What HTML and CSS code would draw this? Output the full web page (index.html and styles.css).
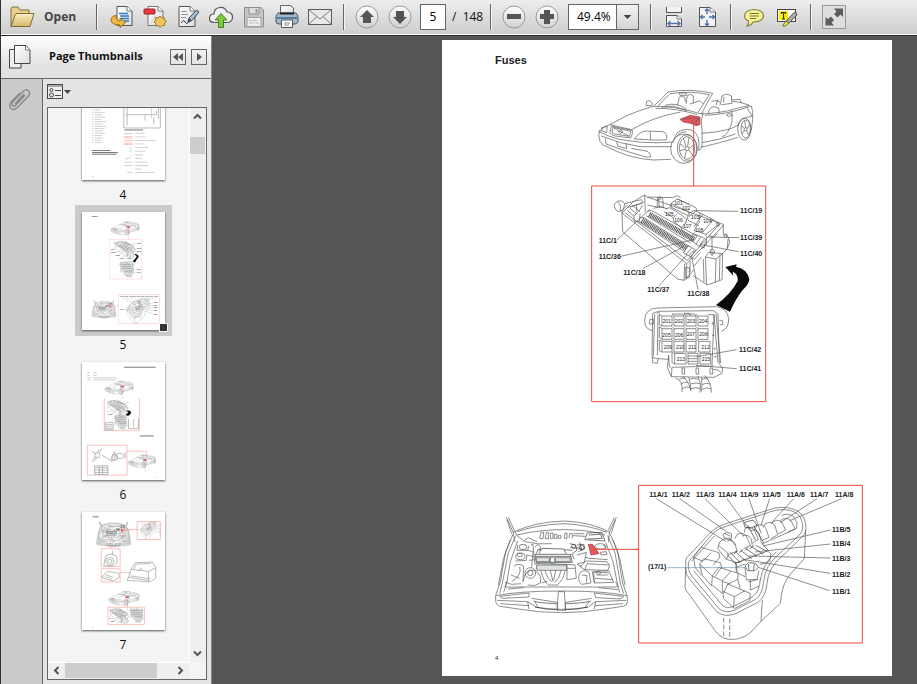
FILE: index.html
```html
<!DOCTYPE html>
<html lang="en">
<head>
  <meta charset="UTF-8">
  <meta name="viewport" content="width=device-width, initial-scale=1.0">
  <title>Fuses</title>
  <link rel="stylesheet" href="styles.css">
</head>
<body>
  <!-- shared drawings, used by the page and by the thumbnails -->
  <svg class="library" width="0" height="0" aria-hidden="true">
    <defs>
      <linearGradient id="folderFill" x1="0" y1="0" x2="0" y2="1">
        <stop offset="0" stop-color="#fbefc8"/><stop offset="1" stop-color="#d8b869"/>
      </linearGradient>
      <linearGradient id="paperFill" x1="0" y1="0" x2="1" y2="1">
        <stop offset="0" stop-color="#fff"/><stop offset="1" stop-color="#ddd"/>
      </linearGradient>
      <linearGradient id="roundFill" x1="0" y1="0" x2="0" y2="1">
        <stop offset="0" stop-color="#fff"/><stop offset="1" stop-color="#cfcfcf"/>
      </linearGradient>

      <symbol id="car" viewBox="0 0 540 330">
        <path d="M28 158 Q34 142 62 133 L110 107 Q150 90 190 79 M60 134 L125 149 Q185 112 272 96 M28 150 Q24 168 30 184 L38 194 L80 214 Q130 236 190 240 L243 238 M30 156 Q50 168 88 178 L155 187 Q200 190 252 186 M34 168 Q90 192 150 200 L245 200 M46 176 L48 192 L120 217 L168 231 L182 231 Q182 218 172 214 L124 205 M80 184 L83 198 L110 206 L108 190"/>
        <path d="M64 138 L60 158 Q64 166 76 168 L122 174 Q129 162 127 151 Q95 146 64 138 M69 142 L66 157 Q70 162 80 163 L118 169 Q122 160 122 154 Z M72 144 L116 168 M92 150 L98 155 L91 161 L85 155 Z"/>
        <path d="M133 177 Q148 155 168 153 L218 155 Q236 160 228 180 Q180 181 133 177 M180 155 L182 179 M34 143 L52 139 L50 158 L36 153 Z"/>
        <path d="M190 79 Q215 58 234 36 Q300 24 368 40 Q352 68 334 102 M203 80 Q222 58 240 41 Q300 31 358 44 L324 97 M190 79 Q250 76 334 102 M196 85 Q260 84 322 104 M215 82 L250 78 L290 92 M225 76 Q260 65 290 88 M168 76 L170 64 L180 62 L188 72 L185 77 Z M268 39 L290 39 L288 46 L270 46 Z"/>
        <path d="M262 77 L268 52 Q276 44 284 52 L286 66 M288 72 L292 46 Q302 40 310 48 L310 70 M300 72 L330 62 L340 72 M390 76 L396 48 Q410 38 424 48 L426 70 L395 74 M402 50 L400 68 M384 58 L378 76 M356 100 Q356 82 372 80 L386 84 L388 100 M424 60 L450 58 L454 70 M364 64 Q378 58 390 66"/>
        <path d="M334 102 Q400 98 430 88 L478 76 Q455 66 428 64 M345 106 Q410 104 484 78 Q490 92 488 118 M340 98 L334 120 Q338 160 336 200 M334 160 Q380 158 420 147 L444 136 M336 188 Q390 180 436 162 M336 201 Q400 186 444 172 M425 92 Q432 130 412 158 Q406 168 396 170 M444 138 Q450 112 488 108 M488 118 L484 150 L478 158 M470 82 L486 108"/>
        <ellipse cx="418" cy="105" rx="8" ry="4"/>
        <path d="M252 182 Q255 150 290 148 Q322 148 327 185 L326 212 Q334 208 336 198 M260 170 Q268 156 290 155"/>
        <ellipse cx="282" cy="206" rx="40" ry="44"/><ellipse cx="291" cy="204" rx="29" ry="40"/><ellipse cx="291" cy="204" rx="23" ry="34"/><circle cx="291" cy="206" r="6"/>
        <path d="M288 200 L280 174 M293 199 L297 172 M297 205 L312 194 M297 210 L308 226 M289 212 L284 234 M285 208 L270 212 M284 201 L270 192"/>
        <ellipse cx="463" cy="147" rx="20" ry="33"/><ellipse cx="467" cy="147" rx="14" ry="27"/><circle cx="467" cy="148" r="5"/>
        <path d="M467 143 L464 122 M471 146 L479 134 M470 152 L476 166 M463 151 L456 162 M462 145 L455 136"/>
        <path class="red-fill" d="M270 118 L300 106 L330 111 L330 134 L318 137 L306 131 L280 126 Z"/>
        <path d="M278 118 L306 114 L328 116 M306 130 L307 120 M318 136 L318 122 L328 118"/>
        <path class="red-line" d="M311 126 V319"/>
      </symbol>

      <symbol id="fuseBoxes" viewBox="0 0 540 660">
        <path class="red-line" d="M5 3 H527 V650 H5 Z"/>
        <!-- upper box -->
        <path d="M96 84 L98 140 L262 282 L283 286 L312 254 M96 84 L290 236 L398 124 M104 82 L292 226 L388 118 M96 84 L130 50 L164 30 L172 36 L400 118 L398 126 M164 30 L166 80 M172 36 L248 38 L262 32 L272 38 M400 120 L400 148 M96 84 L96 76 L112 60 M290 236 V284 M300 228 L300 262 M284 236 L282 286"/>
        <path d="M82 50 Q68 56 76 72 Q84 84 98 76 M82 50 Q92 42 104 56 L100 76 M82 50 Q96 60 90 78 M104 56 L154 44 L160 52 L120 66 M112 68 L158 54 M112 76 L132 94 L150 74 L158 60 M120 70 L142 88 M128 62 L150 80 M132 94 L132 108 L156 112 M140 60 L140 80 M150 86 L148 108"/>
        <path d="M202 40 Q210 32 218 40 L220 66 M202 40 V66 M206 42 L208 68 M172 60 L200 66 L222 68 M190 70 L212 64 L232 72 M244 54 L262 42 L318 68 L320 76 L298 94 L242 66 Z M262 42 L298 58 M242 66 L244 56 L296 80 L298 94"/>
        <path d="M226 72 L238 68 L260 80 L290 102 L286 116 M222 80 L250 98 L262 86 M250 98 L250 108 L274 128 L290 110 M274 128 L276 136 L304 154 L314 142 M296 86 L312 76 L330 84 L328 106 M292 94 L294 106 L326 122 M330 84 L370 104 L386 118 L348 148 L312 136 L330 108 M338 88 L312 126 M370 104 L336 144"/>
        <path class="hatch" d="M178 88 L312 164 M156 106 L290 190"/>
        <path d="M172 80 L184 76 L322 154 M168 92 L302 174 M150 98 L162 98 L298 184 M146 110 L284 200 M302 164 L316 148 L344 160 L328 184 Z M322 152 L310 170 M332 156 L318 178 M280 204 L294 182 L316 194 L304 216 Z M288 208 L304 190 M296 212 L312 196 M348 148 L350 178 L336 192 M356 150 L370 158 L382 146 M366 158 L366 202 M328 182 L342 188 L346 170 M300 218 L314 222 L328 206"/>
        <path d="M400 148 Q420 150 418 176 L412 190 L398 206 L396 284 L352 300 L310 272 M412 190 L414 162 M356 202 L398 206 L378 222 L346 216 Z M346 216 L350 298 M378 222 L376 292 M340 222 L342 292 M334 216 L312 244 M390 208 L388 286 M360 204 Q358 192 368 192 Q378 196 372 206 M286 248 H298 V278 H286 Z"/>
        <circle cx="407" cy="152" r="5"/><circle cx="366" cy="207" r="4"/><circle cx="384" cy="118" r="5"/><circle cx="208" cy="40" r="4"/>
        <path d="M445 79 L318 77 M80 166 L180 72 M92 214 L312 164 M160 250 L282 184 M207 302 L292 208 M324 314 L306 220 M448 158 L354 156 M446 200 L330 178"/>
        <path class="black-fill" d="M406 246 L440 238 L438 245 Q474 252 478 284 Q476 298 458 315 Q438 340 420 380 L378 360 Q424 326 443 288 Q446 268 428 260 L430 272 Z"/>
        <g class="label">
          <text x="450" y="84">11C/19</text><text x="26" y="174">11C/1</text><text x="26" y="222">11C/36</text>
          <text x="100" y="269">11C/18</text><text x="172" y="321">11C/37</text><text x="292" y="332">11C/38</text>
          <text x="450" y="164">11C/39</text><text x="450" y="212">11C/40</text>
          <text x="447" y="500">11C/42</text><text x="447" y="557">11C/41</text>
        </g>
        <g class="fuse-number">
          <text x="253" y="59">101</text><text x="276" y="74">102</text><text x="303" y="102">103</text><text x="340" y="115">104</text>
          <text x="226" y="92">105</text><text x="253" y="110">106</text><text x="279" y="128">107</text><text x="315" y="140">108</text>
        </g>
        <!-- lower box -->
        <g transform="translate(0 315)">
          <path d="M188 122 Q163 118 164 90 Q166 56 200 54 L380 50 Q414 56 416 88 Q416 116 394 124 M188 70 L206 64 L370 62 L384 72 L388 220 M188 70 L186 202 M194 72 L190 198 M200 70 L210 66 M204 74 L202 196 M186 202 L204 206 L236 208 M188 202 L188 218 L202 220 L204 206 M236 196 L238 230 L246 236 L244 260 L232 232 L236 196 M246 232 L370 228 M244 260 L372 262 L396 250 L398 234 L386 220 M354 74 L372 74 L366 228 M372 74 L384 218 M378 72 L392 220 M180 88 L190 88 L190 102 L178 102 Z M388 92 H398 V104 H390"/>
          <path d="M216 78 H246 V108 H216 Z M252 78 H282 V108 H252 Z M288 78 H318 V108 H288 Z M324 78 H354 V108 H324 Z M216 116 H246 V148 H216 Z M252 116 H282 V148 H252 Z M288 116 H318 V148 H288 Z M324 116 H354 V148 H324 Z M216 154 H246 V186 H216 Z M252 154 H282 V186 H252 Z M288 154 H318 V186 H288 Z M326 154 H360 V186 H326 Z M254 190 H288 V222 H254 Z M294 190 H324 V222 H294 Z M330 190 H362 V222 H330 Z"/>
          <path d="M216 78 L208 72 V104 L216 108 M252 78 L246 72 H278 L282 78 M288 78 L282 72 H314 L318 78 M324 78 L318 72 M216 116 L208 110 V142 L216 148 M252 116 L246 110 M288 116 L282 110 M324 116 L318 110 M216 154 L208 150 V182 L216 186 M252 154 L246 150 M288 154 L282 150 M326 154 L318 150 M254 190 L246 188 V218 L254 222 M294 198 H324 M294 206 H324 M294 214 H324 M282 70 L300 70 L300 78"/>
          <path d="M276 234 H284 V252 H276 Z M318 234 H326 V252 H318 Z M360 234 H368 V252 H360 Z M370 238 L384 240 L392 246 M256 264 Q280 270 276 306 M280 258 Q300 280 302 300 M268 268 Q276 262 286 266 M272 282 Q284 274 294 278 M276 296 Q290 288 300 292 M296 262 Q304 284 302 304 M324 258 Q336 284 330 308 M298 268 Q310 262 326 268 M302 282 Q318 276 332 282 M302 296 Q318 290 332 296 M334 262 Q338 284 334 304 M344 256 Q364 276 364 308 M336 268 Q348 262 354 268 M336 284 Q350 276 360 282 M336 298 Q350 290 364 296"/>
          <circle cx="368" cy="100" r="2"/><circle cx="370" cy="136" r="2"/><circle cx="374" cy="176" r="2"/><circle cx="376" cy="200" r="2"/>
          <path d="M440 179 L320 200 M440 236 L318 226"/>
          <g class="fuse-number">
            <text x="218" y="100">201</text><text x="254" y="100">202</text><text x="291" y="100">203</text><text x="327" y="100">204</text>
            <text x="217" y="140">205</text><text x="255" y="140">206</text><text x="290" y="139">207</text><text x="328" y="138">208</text>
            <text x="221" y="176">209</text><text x="258" y="177">210</text><text x="295" y="176">211</text><text x="334" y="176">212</text>
            <text x="260" y="213">213</text><text x="335" y="213">215</text>
          </g>
        </g>
      </symbol>

      <symbol id="engineBay" viewBox="0 0 480 435">
        <path d="M64 97 L84 140 L90 172 M70 97 L88 136 M66 104 L80 146 M394 97 L374 140 L370 172 M388 97 L370 136 M392 104 L378 146 M84 142 Q150 110 240 108 Q320 112 374 142 M96 140 Q160 118 240 116 Q310 120 366 142 M88 136 L96 152 L120 170 Q160 180 200 176 M96 150 Q170 132 250 134 Q320 136 360 150 M118 166 L130 158 L156 170"/>
        <path d="M164 160 L168 142 H176 L174 162 Z M180 160 L184 142 H190 L190 162 Z M196 160 V144 H204 V160 Z M208 160 V148 H216 V160 Z M220 160 V152 H228 V160 Z M238 160 L240 144 H246 L246 160 Z M252 160 L254 146 H262 V160 M264 152 L300 154 M266 146 L298 146"/>
        <path class="thick" d="M300 164 L306 144 L350 142 L360 168 Z M312 150 L346 148 L352 160 L308 162"/>
        <path d="M84 148 L62 200 L46 290 L32 332 M92 152 L70 204 L52 294 L44 326 M76 164 L56 220 L40 300 M98 168 L76 230 L66 290 L56 322 M376 148 L398 200 L412 290 L426 332 M368 152 L390 204 L406 294 L416 326 M384 164 L404 220 L420 300 M362 172 L384 230 L396 290 L404 322 M66 290 L60 306 L398 306 L392 290"/>
        <ellipse cx="114" cy="186" rx="12" ry="8"/><ellipse cx="106" cy="214" rx="14" ry="10"/><ellipse cx="104" cy="210" rx="8" ry="5"/>
        <path d="M92 228 L124 226 L126 208 M98 180 L96 196 L128 196 L132 182 M138 180 L144 178 L150 240 M126 196 L144 200 L140 248 M150 186 L158 178 L166 186 L164 206 M128 210 L148 216 M132 226 L150 224 M86 244 Q100 232 116 244 L114 290 M78 270 L104 280 M80 290 Q112 270 104 246 M60 292 L80 298 L108 296"/>
        <path class="thick" d="M150 208 H256 L262 232 H154 Z M152 214 H258 M152 236 L246 238 M166 196 L170 190 L236 192 L244 206 M152 250 H246 M254 176 L272 180 L276 196 L262 206 M276 180 L296 178 L300 190 L280 200 M256 188 L290 190 M284 172 L290 196 M260 206 L268 222 M238 194 L262 196 M154 206 L160 192 L170 196"/>
        <path class="grey-fill" d="M154 240 H244 L246 256 H156 Z M154 218 H196 V230 H154 Z M210 218 H256 V230 H210 Z"/>
        <circle cx="202" cy="226" r="9"/><circle cx="136" cy="264" r="16"/><circle cx="136" cy="264" r="8"/><circle class="thick" cx="266" cy="184" r="6"/><circle class="thick" cx="290" cy="188" r="7"/>
        <path d="M114 290 Q120 250 150 256 Q172 270 166 294 Q150 306 128 300 M168 258 Q176 290 190 300 M180 256 Q186 280 200 290 M196 256 L204 290 M212 256 L206 286 M228 256 Q224 280 210 292 M240 258 Q236 284 218 298 M190 300 H220 M170 294 L188 288 M246 238 L270 240 L274 280 L246 284 Z M248 250 H270 M276 210 L304 202 L298 232 L278 236"/>
        <path d="M286 246 L302 228 L366 230 L374 242 L368 256 L300 254 Z M300 254 L306 236 L372 240 M316 220 L368 224 M322 260 L374 264 L386 292 L328 294 Z M328 294 L326 262 L336 258 L376 258 M336 270 H368 M330 280 L384 284 M286 262 Q300 252 312 262 L318 294 L290 298 Q278 290 282 270 Z M290 270 L306 272 L304 292 M300 216 L318 222 M346 202 L364 200 L366 208 L348 210 Z M354 180 L364 186 L360 196 M276 238 L290 244"/>
        <ellipse cx="346" cy="184" rx="16" ry="8"/><ellipse cx="340" cy="264" rx="7" ry="4"/>
        <path class="red-fill" d="M310 178 L322 178 L334 193 L342 206 L318 210 Z"/>
        <path class="red-line" d="M322 193 H462"/>
        <path d="M32 332 Q100 318 230 318 Q360 318 426 332 L428 350 Q426 362 414 364 L360 372 Q230 394 100 372 L46 364 Q32 360 32 346 Z M44 334 L132 324 V336 L52 340 Z M328 324 L416 334 L408 342 L332 338 Z M36 346 L128 350 L150 364 M424 346 L332 350 L312 364 M46 356 L132 362 M414 356 L330 362 M128 350 L132 372 M332 350 L328 372 M140 340 L216 352 L218 376 M320 340 L242 352 L240 376 M220 320 H238 L242 376 H216 Z M150 350 L160 368 M312 350 L300 368 M150 366 Q230 380 310 366 M70 312 L116 308 M340 308 L400 314"/>
        <path class="thick" d="M146 348 Q160 354 214 356 M244 356 Q300 354 318 348 M150 366 Q180 374 216 374 M242 374 Q280 374 310 366"/>
      </symbol>

      <symbol id="underhoodBox" viewBox="0 0 696 504">
        <path class="red-line" d="M11 16 H682 V489 H11 Z M0 208 H11"/>
        <path d="M152 246 Q150 232 164 224 L228 156 Q244 140 270 132 L400 90 Q440 76 470 86 Q500 94 508 118 Q520 150 504 168 L440 230 Q400 262 396 310 Q392 350 370 366 L304 400 Q270 414 246 396 L166 300 Q150 284 152 264 Z M160 246 L234 160 Q248 146 276 138 L404 96 Q440 84 468 92 Q494 100 500 122 Q508 146 496 162 L432 222 Q390 256 386 304 Q382 344 362 358 L300 390 Q272 402 252 386 L172 290 Q160 276 160 262 Z M170 244 L238 168 M376 296 Q374 334 354 350 L298 378 Q276 388 262 376 L176 272 M424 216 Q384 248 376 300"/>
        <path d="M152 264 L150 322 Q152 334 162 342 L240 452 Q262 482 296 478 Q326 476 348 456 L378 424 L436 370 Q440 310 468 280 L508 236 L512 150 M378 424 L382 360"/>
        <path class="dashes" d="M266 414 V470 M284 416 V474"/>
        <path d="M176 232 L198 202 L252 218 L254 232 L234 256 M176 232 L180 262 L200 286 M176 232 L204 244 L226 220 M194 252 L206 236 L256 248 L260 262 L240 290 M194 252 L202 286 L230 318 L232 288 L194 252 M232 288 L252 262 L310 280 L308 300 M232 288 L262 302 L288 274 M232 316 L262 340 L262 302 M264 344 L278 312 L346 340 L344 362 L298 386 M264 344 L266 356 L296 384 L298 350 L264 334 M298 350 L330 332 M262 304 L286 312 M280 312 L308 298 L316 326"/>
        <path d="M248 206 L254 186 Q266 172 284 174 L300 196 M248 206 L274 238 L282 222 L250 196 M274 238 L302 246 L304 276 M264 164 L276 156 L290 162 L288 180 L268 176 Z M268 160 L286 168 M276 184 Q290 176 300 190 L306 214 L284 222 M300 176 L306 164 Q322 154 334 168 L346 196 L326 206 M322 168 Q338 160 348 176 L352 196 M328 158 L330 146 Q344 136 358 150 L370 178 L352 190 M348 152 Q364 146 372 160 L378 182 M358 150 L366 136 Q382 130 392 144 L402 172 L380 182 M384 142 L392 130 Q410 122 420 138 L428 164 L408 176 M410 130 Q424 114 440 126 L452 150 L430 162 M436 122 Q452 108 468 122 L480 146 L456 158 M440 106 Q462 98 476 110 L486 128 L484 146 L380 192"/>
        <path class="thick" d="M326 128 L354 120 L366 136 L348 144 L330 142 Z M338 136 L362 180 M356 138 L386 188 M276 222 L300 250 L320 244 M284 216 L316 248 M300 214 L334 244 M316 210 L350 236 M332 206 L366 228 M346 198 L384 222 M362 196 L396 214 M296 222 L308 212 M312 218 L324 208 M330 212 L340 202 M344 206 L358 196 M300 250 L400 212 L376 184"/>
        <path d="M400 214 L408 222 L404 244 L374 254 M304 252 L306 278 L330 290 M330 262 L334 300 L366 298 L372 272 M346 300 L346 330 L372 318 M340 306 L370 298 M302 262 L330 252"/>
        <path class="thick" d="M330 258 L340 248 L362 250 L370 262 L360 272 L338 272 Z M340 252 L342 270 M358 252 L356 270"/>
        <path d="M64 56 L272 184 M134 56 L274 154 M210 56 L326 168 M276 56 L344 150 M342 56 L378 160 M404 56 L378 136 M476 56 L408 130 M546 56 L436 128 M620 56 L464 122 M586 150 L384 198 M586 192 L360 216 M586 234 L342 228 M586 280 L322 238 M584 332 L370 262"/>
        <path class="blue-line" d="M98 263 H330"/>
        <g class="label">
          <text x="43" y="50">11A/1</text><text x="110" y="50">11A/2</text><text x="183" y="50">11A/3</text><text x="250" y="50">11A/4</text>
          <text x="315" y="50">11A/9</text><text x="382" y="50">11A/5</text><text x="455" y="50">11A/6</text><text x="525" y="50">11A/7</text><text x="600" y="50">11A/8</text>
          <text x="591" y="155">11B/5</text><text x="591" y="199">11B/4</text><text x="591" y="243">11B/3</text><text x="591" y="291">11B/2</text><text x="591" y="342">11B/1</text>
          <text x="39" y="268">(17/1)</text>
        </g>
      </symbol>

      <symbol id="fusePage" viewBox="0 0 450 636">
        <text class="heading" x="53" y="24">Fuses</text>
        <use href="#car" x="148" y="40" width="180" height="110"/>
        <use href="#fuseBoxes" x="148" y="145" width="180" height="220"/>
        <use href="#engineBay" x="43" y="445" width="160" height="145"/>
        <use href="#underhoodBox" x="193" y="440" width="232" height="168"/>
        <text class="folio" x="53" y="620">4</text>
      </symbol>
    </defs>
  </svg>

  <div class="app">
    <header class="toolbar">
      <button class="open" type="button">
        <svg width="26" height="22" viewBox="0 0 26 22"><path d="M2 20 V3 Q2 1 4 1 H9 L11 4 H20 V8" fill="#e9d08c" stroke="#7c6a3c"/><path d="M2 20.500 L6 9 Q7 7.500 8 7.500 H25 L21 20.500 Z" fill="url(#folderFill)" stroke="#7c6a3c"/></svg>
        Open
      </button>
      <span class="separator"></span>
      <button class="tool" type="button" aria-label="Convert">
        <svg width="24" height="24" viewBox="0 0 24 24"><path d="M7 1.500 H17 L22 6 V20.500 H7 Z" fill="url(#paperFill)" stroke="#555"/><path d="M17 1.500 V6 H22" fill="#fff" stroke="#777"/><path d="M9 8.500 H18 M10 11 H19 M11 13.500 H19 M14 16 H19" stroke="#2f78c4" stroke-width="1.500"/><path d="M6 10.500 Q1 11 1 15.500 Q2 20 10 20 V22.500 L15.500 17.500 L10 13 V16 Q6 16 6 10.500 Z" fill="#f0b840" stroke="#98691a"/></svg>
      </button>
      <button class="tool" type="button" aria-label="Create PDF">
        <svg width="24" height="24" viewBox="0 0 24 24"><path d="M5 1.500 H15 L20 6 V20.500 H5 Z" fill="url(#paperFill)" stroke="#777"/><path d="M15 1.500 V6 H20" fill="#fff" stroke="#777"/><rect x="1" y="4" width="11" height="5" rx="1" fill="#e23b42" stroke="#a01c24"/><path d="M17 11 L18.500 13 L21 12 L21 14.500 L23.500 16.500 L21.500 18 L21.500 20.500 L19 20.500 L17 22.500 L15.500 20.500 L13 21 L13 18.500 L11 17 L13 15 L12.500 12.500 L15 13 Z" fill="#f3c65a" stroke="#a5742a"/><path d="M8 18 Q13 12 11 9" fill="none" stroke="#c8c8c8"/></svg>
      </button>
      <button class="tool" type="button" aria-label="Sign">
        <svg width="24" height="24" viewBox="0 0 24 24"><path d="M3 1.500 H14 L19 6 V21.500 H3 Z" fill="url(#paperFill)" stroke="#555"/><path d="M14 1.500 V6 H19" fill="#fff" stroke="#777"/><path d="M5 6.500 H11 M5 9.500 H12 M5 12.500 H10" stroke="#999"/><path d="M5 18 Q8 14 9 17 T13 17" fill="none" stroke="#333"/><path d="M12 17 L13 13 L20.500 5 L23 7 L16 15.500 Z" fill="#9fc0dc" stroke="#444"/><path d="M12 17 L13 13 L15.500 15.500 Z" fill="#444"/></svg>
      </button>
      <button class="tool" type="button" aria-label="Upload">
        <svg width="24" height="24" viewBox="0 0 24 24"><path d="M5 17.500 Q0 17 .5 12.500 Q1 9 5 9 Q5 3 11 2.500 Q16 2 18 7 Q23.500 7 23.500 12.500 Q23 17.500 18 17.500 Z" fill="#f1f1f1" stroke="#555" stroke-width="1.200"/><path d="M12 8.500 L18 15 H14.500 V22.500 H9.500 V15 H6 Z" fill="#7fcb3f" stroke="#3f8420"/></svg>
      </button>
      <button class="tool" type="button" aria-label="Save">
        <svg width="24" height="24" viewBox="0 0 24 24"><path d="M2.500 2.500 H19 L21.500 5 V22 H2.500 Z" fill="#c4c4c4" stroke="#8f8f8f"/><path d="M7 2.500 H17 V9 H7 Z" fill="#dedede" stroke="#8f8f8f"/><path d="M13.500 4 H15.500 V8 H13.500 Z" fill="#999"/><path d="M5 12.500 H19 V21.500 H5 Z" fill="#eee" stroke="#a0a0a0"/><path d="M7 15.500 H10 M11 15.500 H15 M7 18 H12 M13 18 H17" stroke="#bbb"/></svg>
      </button>
      <button class="tool" type="button" aria-label="Print">
        <svg width="24" height="24" viewBox="0 0 24 24"><path d="M5.500 .5 H15 L18.500 3 V9 H5.500 Z" fill="url(#paperFill)" stroke="#666"/><path d="M3 8 H21 L23 11 V17 Q22 19 20 19 H4 Q1 19 1 16 V11 Z" fill="#9fb9cf" stroke="#3f5468"/><path d="M2 12 H22 V14 H2 Z" fill="#5d7d98"/><path d="M5 8.500 H19" stroke="#222" stroke-width="2"/><path d="M6.500 15 H17.500 V22.500 H6.500 Z" fill="#fff" stroke="#555"/><path d="M9 18 H15 M9 20 H14" stroke="#888"/></svg>
      </button>
      <button class="tool" type="button" aria-label="E-mail">
        <svg width="24" height="24" viewBox="0 0 24 24"><rect x=".5" y="4.500" width="23" height="15" fill="#e9e9e9" stroke="#5a5a5a"/><path d="M1 5 L12 14 L23 5 M1 19 L9 11.500 M23 19 L15 11.500" fill="none" stroke="#7c7c7c"/></svg>
      </button>
      <span class="separator"></span>
      <button class="tool" type="button" aria-label="Previous page">
        <svg width="24" height="24" viewBox="0 0 24 24"><circle cx="12" cy="12" r="11" fill="url(#roundFill)" stroke="#999"/><path d="M12 5 L19 12 H16 V18 H8 V12 H5 Z" fill="#555"/></svg>
      </button>
      <button class="tool" type="button" aria-label="Next page">
        <svg width="24" height="24" viewBox="0 0 24 24"><circle cx="12" cy="12" r="11" fill="url(#roundFill)" stroke="#999"/><path d="M12 19 L19 12 H16 V6 H8 V12 H5 Z" fill="#555"/></svg>
      </button>
      <input class="page-number" type="text" value="5" aria-label="Page number">
      <span class="page-total">/&nbsp; 148</span>
      <span class="separator"></span>
      <button class="tool" type="button" aria-label="Zoom out">
        <svg width="24" height="24" viewBox="0 0 24 24"><circle cx="12" cy="12" r="11" fill="url(#roundFill)" stroke="#999"/><path d="M5 9 H19 V14 H5 Z" fill="#555"/></svg>
      </button>
      <button class="tool" type="button" aria-label="Zoom in">
        <svg width="24" height="24" viewBox="0 0 24 24"><circle cx="12" cy="12" r="11" fill="url(#roundFill)" stroke="#999"/><path d="M5 9 H9 V5 H15 V9 H19 V14 H15 V19 H9 V14 H5 Z" fill="#555"/></svg>
      </button>
      <span class="zoom">
        <select aria-label="Zoom level">
          <option>49.4%</option>
          <option>100%</option>
        </select>
        <svg class="zoom-arrow" width="22" height="24" viewBox="0 0 22 24"><path d="M7 10 H15 L11 14 Z" fill="#444"/></svg>
      </span>
      <span class="separator"></span>
      <button class="tool" type="button" aria-label="Fit width">
        <svg width="24" height="24" viewBox="0 0 24 24"><path d="M4.500 2 V7.500 H19.500 V2" fill="#f3f3f3" stroke="#555"/><path d="M4.500 10.500 H15 L19.500 14 V21.500 H4.500 Z" fill="#f3f3f3" stroke="#555"/><path d="M15 10.500 V14 H19.500" fill="#fff" stroke="#777"/><path d="M6 18.500 H18 M8.500 16 L6 18.500 L8.500 21 M15.500 16 L18 18.500 L15.500 21" fill="none" stroke="#4f6fae" stroke-width="1.300"/></svg>
      </button>
      <button class="tool" type="button" aria-label="Fit page">
        <svg width="24" height="24" viewBox="0 0 24 24"><path d="M4.500 2.500 H15 L20.500 7 V21.500 H4.500 Z" fill="#f3f3f3" stroke="#555"/><path d="M15 2.500 V7 H20.500" fill="#fff" stroke="#777"/><path d="M12 4 V9 M12 15 V20.500 M5.500 12 H10 M14 12 H19.500 M10 6 L12 4 L14 6 M10 18.500 L12 20.500 L14 18.500 M7.500 10 L5.500 12 L7.500 14 M17.500 10 L19.500 12 L17.500 14" fill="none" stroke="#4f6fae" stroke-width="1.300"/></svg>
      </button>
      <span class="separator"></span>
      <button class="tool" type="button" aria-label="Comment">
        <svg width="24" height="24" viewBox="0 0 24 24"><path d="M12 4.500 Q21.500 5 21.500 11 Q21 17 11 17 Q9 21 5 21 Q7 19 6.500 16 Q2.500 14 2.500 11 Q3 5 12 4.500 Z" fill="#fbf398" stroke="#877f3c" stroke-width="1.200"/><path d="M7.500 8.500 H17 M7.500 11 H17 M8 13.500 H14" stroke="#77703a"/></svg>
      </button>
      <button class="tool" type="button" aria-label="Highlight text">
        <svg width="24" height="24" viewBox="0 0 24 24"><rect x="2.500" y="4.500" width="18" height="12" fill="#fff" stroke="#444"/><rect x="4" y="6" width="9" height="9" fill="#fff000"/><path d="M6 7.500 H11 M8.500 7.500 V14 M7 14 H10 M6.500 7 V9 M10.500 7 V9" stroke="#333" stroke-width="1.200"/><path d="M11 16 L19 7.500 Q22 7 22 10 L14 18 Z" fill="#aaa" stroke="#555"/><path d="M11 16 L14 18 L10 21 H7.500 Z" fill="#f5e93a" stroke="#777030"/></svg>
      </button>
      <span class="separator"></span>
      <button class="tool" type="button" aria-label="Read mode">
        <svg width="24" height="24" viewBox="0 0 24 24"><rect x=".5" y=".5" width="23" height="23" fill="#dedede" stroke="#999"/><path d="M12 3.500 H21 V12 L18.500 9.500 L15.500 12.500 L12 9 L14.500 6.500 Z M3.500 12 L6 14 L9 11.500 L12 15 L9.500 17.500 L12 20.500 H3.500 Z" fill="#5c5c5c"/></svg>
      </button>
    </header>

    <div class="workspace">
      <aside class="sidebar">
        <div class="panel-head">
          <button class="rail-tab" type="button" aria-label="Page Thumbnails panel">
            <svg width="22" height="24" viewBox="0 0 22 24"><path d="M.5 4.500 H12 V23 H.5 Z" fill="#f0f0f0" stroke="#444"/><path d="M5.500 .5 H17 L21 5 V18.500 H5.500 Z" fill="url(#paperFill)" stroke="#444"/><path d="M16.500 1 V5 H21" fill="#fff" stroke="#777"/></svg>
          </button>
          <h2>Page Thumbnails</h2>
          <button class="square" type="button" aria-label="Collapse panel">
            <svg width="14" height="14" viewBox="0 0 14 14"><path d="M7 3 V11 L2 7 Z M12 3 V11 L7 7 Z" fill="#555"/></svg>
          </button>
          <button class="square" type="button" aria-label="Expand panel">
            <svg width="14" height="14" viewBox="0 0 14 14"><path d="M5 3 V11 L10 7 Z" fill="#555"/></svg>
          </button>
        </div>
        <div class="panel-body">
          <div class="rail">
            <button class="rail-tab" type="button" aria-label="Attachments">
              <svg width="24" height="24" viewBox="0 0 24 24"><path d="M17 8 L8 18 Q6 20 4.500 18.500 Q3 17 5 14.500 L15 4.500 Q18 1.500 20.500 4 Q23 6.500 20 9.500 L10 20 Q6 24 3 21.500 Q0 18.500 3.500 14.500 L12 6 M7 17 L16 7" fill="none" stroke="#8a8a8a" stroke-width="1.500"/></svg>
            </button>
          </div>
          <div class="thumbs-panel">
            <button class="options" type="button" aria-label="Options">
              <svg width="25" height="16" viewBox="0 0 25 16"><rect x=".5" y=".5" width="15" height="14" fill="#eee" stroke="#444"/><path d="M1 2 H15" stroke="#aaa" stroke-width="2"/><circle cx="4.500" cy="6" r="1.500" fill="none" stroke="#444"/><circle cx="4.500" cy="11" r="2" fill="none" stroke="#444"/><path d="M8 6.500 H14 M8 11.500 H14" stroke="#444"/><path d="M17 6 H24 L20.500 10 Z" fill="#444"/></svg>
            </button>
            <div class="list-box">
              <div class="thumbs">
                <a class="thumb" href="#page-4">
                  <span class="frame">
                    <svg class="sheet" viewBox="0 0 250 354">
                      <path class="copy" d="M30 130 h4 M38 130 h22 M30 137 h4 M38 137 h28 M30 144 h4 M38 144 h18 M30 151 h4 M38 151 h30 M30 158 h4 M38 158 h24 M30 165 h4 M38 165 h32 M30 172 h4 M38 172 h20 M30 179 h4 M38 179 h34 M30 186 h4 M38 186 h26 M30 193 h4 M38 193 h36 M30 200 h4 M38 200 h30 M30 207 h4 M38 207 h26 M30 214 h4 M38 214 h30 M30 221 h4 M38 221 h22 M30 228 h4 M38 228 h24 M30 235 h4 M38 235 h20 M30 242 h4 M38 242 h20 M160 214 h30 M160 225 h30 M160 236 h62 M160 246 h24 M160 257 h40 M160 268 h30 M160 279 h24 M160 290 h22 M160 301 h36 M160 311 h40 M160 322 h18 M160 332 h58 M126 215 h26 M142 256 l8 6 M142 270 l8 -4 M148 278 v4 M130 292 l16 -6 M128 301 h22 M128 311 h24 M136 332 h16 M30 344 h5"/>
                      <path class="copy dark" d="M128 204 h56 M30 266 h56 M30 272 h78 M30 277 h74"/>
                      <path class="red-line" d="M126 224 h26 M126 228 h26 M126 236 h26 M126 244 h26 M126 248 h26 M209 100 v68"/>
                      <path class="outline" d="M126 100 V198 H236 V100 M132 116 H198 M132 158 H224 V146 M190 158 V176 M216 166 V188 M230 100 V170 M136 116 V190"/>
                    </svg>
                  </span>
                  <span class="number">4</span>
                </a>
                <a class="thumb selected" href="#page-5">
                  <span class="frame">
                    <svg class="sheet" viewBox="0 0 450 636"><use href="#fusePage"/></svg>
                    <span class="corner"></span>
                  </span>
                  <span class="number">5</span>
                </a>
                <a class="thumb" href="#page-6">
                  <span class="frame">
                    <svg class="sheet" viewBox="0 0 250 354">
                      <path class="copy dark" d="M126 15 h96 M174 222 h42"/>
                      <path class="copy" d="M16 32 h8 M34 32 h12 M16 40 h8 M34 40 h10 M16 47 h10 M34 47 h70 M16 53 h10 M34 53 h70 M218 347 h4"/>
                      <use href="#car" x="64" y="51" width="100" height="61"/>
                      <path class="red-line" d="M67 108 V206 H173 V108 M16 250 H136 V340 H16 Z M136 268 H194 V288"/>
                      <svg x="76" y="112" width="66" height="52" viewBox="90 20 345 280"><use href="#fuseBoxes" width="540" height="660"/></svg>
                      <svg x="96" y="160" width="42" height="44" viewBox="160 370 260 260" preserveAspectRatio="none"><use href="#fuseBoxes" width="540" height="660"/></svg>
                      <path class="outline" d="M70 182 H94 V204 H70 Z M72 188 h20 M72 194 h20 M72 200 h20 M140 170 V200 H170 V170 M156 172 V196 M38 312 H78 V338 H38 Z M38 318 H78 M38 325 H78 M38 332 H78 M52 312 V338 M62 312 V338 M60 280 L90 298 L108 290 M30 268 L44 278 M32 292 L44 284 M30 300 L44 290 M50 262 L48 272 M60 260 L52 272 M88 298 L96 270 M100 268 L98 290 M130 270 V290"/>
                      <circle class="outline" cx="46" cy="280" r="8"/><circle class="outline" cx="98" cy="286" r="9"/><ellipse class="outline" cx="114" cy="282" rx="12" ry="8"/>
                      <path class="black-fill" d="M134 146 Q148 142 148 154 L140 161 L132 158 L140 152 Z"/>
                      <svg x="138" y="266" width="86" height="64" viewBox="20 20 480 235"><use href="#car" width="540" height="330"/></svg>
                    </svg>
                  </span>
                  <span class="number">6</span>
                </a>
                <a class="thumb" href="#page-7">
                  <span class="frame">
                    <svg class="sheet" viewBox="0 0 250 354">
                      <path class="copy dark" d="M32 14 h18"/>
                      <svg x="38" y="24" width="116" height="84" viewBox="20 80 424 320"><use href="#engineBay" width="480" height="435"/></svg>
                      <svg x="166" y="28" width="70" height="54" viewBox="140 70 400 420"><use href="#underhoodBox" width="696" height="504"/></svg>
                      <path class="red-line" d="M166 28 H236 V82 H166 Z M120 52 H166 M58 110 H115 V164 H58 Z M86 82 V110 M58 170 H115 V210 H58 Z M115 182 H146 M78 286 H188 V338 H78 Z"/>
                      <path class="outline" d="M66 158 L72 130 L88 126 L104 132 L106 152 L94 162 H68 Z M92 116 V128 M62 192 L76 178 L112 184 V196 L94 208 L62 198 Z M70 188 L94 196 M70 194 L90 202 M136 206 L148 172 L160 152 L212 150 L222 166 V198 L206 210 L150 206 Z M148 172 L200 178 L222 168 M156 172 L164 156 L208 154 M146 192 L206 200 M200 178 V208 M170 178 Q176 160 182 176 M140 196 L204 206"/>
                      <circle class="outline" cx="84" cy="148" r="12"/><circle class="outline" cx="84" cy="148" r="6"/>
                      <use href="#car" x="76" y="232" width="106" height="65"/>
                      <svg x="82" y="288" width="58" height="48" viewBox="90 20 310 280"><use href="#fuseBoxes" width="540" height="660"/></svg>
                      <svg x="142" y="290" width="44" height="44" viewBox="160 380 250 250"><use href="#fuseBoxes" width="540" height="660"/></svg>
                      <path class="copy" d="M30 346 h5"/>
                    </svg>
                  </span>
                  <span class="number">7</span>
                </a>
              </div>
              <div class="scroll vertical">
                <svg width="16" height="16" viewBox="0 0 16 16"><path d="M4 10.500 L7.500 7 L11 10.500" /></svg>
                <span class="handle"></span>
                <svg width="16" height="16" viewBox="0 0 16 16"><path d="M4 5.500 L7.500 9 L11 5.500" /></svg>
              </div>
              <div class="scroll horizontal">
                <svg width="16" height="16" viewBox="0 0 16 16"><path d="M10.500 4 L7 7.500 L10.500 11" /></svg>
                <span class="handle"></span>
                <svg width="16" height="16" viewBox="0 0 16 16"><path d="M5.500 4 L9 7.500 L5.500 11" /></svg>
              </div>
            </div>
          </div>
        </div>
      </aside>

      <div class="splitter"><span class="grip"></span></div>

      <main class="viewer">
        <svg class="page" viewBox="0 0 450 636" role="img" aria-label="Fuses, page 4">
          <use href="#fusePage"/>
        </svg>
      </main>
    </div>
  </div>
</body>
</html>
```
FILE: styles.css
```css
* {
  box-sizing: border-box;
}

body {
  margin: 0;
  font-family: "Open Sans", "Noto Sans", sans-serif;
  font-size: 12px;
  color: #111;
  background: #555;
}

button {
  padding: 0;
  border: 0;
  background: none;
  font: inherit;
  color: inherit;
  cursor: pointer;
}

svg {
  display: block;
  flex: none;
}

.library {
  position: absolute;
}

.app {
  display: flex;
  flex-direction: column;
  height: 100vh;
  border-left: 1px solid #333;
}

/* toolbar */

.toolbar {
  display: flex;
  align-items: center;
  height: 36px;
  flex: none;
  padding-left: 8px;
  padding-bottom: 2px;
  background: linear-gradient(#ededed, #cdcdcd);
  border-bottom: 1px solid #2e2e2e;
  box-shadow: inset 0 -1px #fff;
}

.open {
  display: flex;
  align-items: center;
  gap: 9px;
  width: 80px;
  font-weight: bold;
  color: #444;
}

.separator {
  width: 2px;
  height: 26px;
  margin: 0 5px 0 7px;
  background: #666;
  border-right: 1px solid #f4f4f4;
}

.open + .separator {
  margin-right: 7px;
}

.tool {
  display: flex;
  justify-content: center;
  width: 33px;
}

.page-number {
  width: 26px;
  height: 26px;
  margin: 0 6px 0 4px;
  padding: 0;
  border: 1px solid #666;
  background: #fff;
  font: inherit;
  text-align: center;
}

.page-total {
  width: 31px;
  white-space: nowrap;
}

.zoom {
  display: grid;
  width: 71px;
  height: 26px;
  margin: 0 4px 0 5px;
  border: 1px solid #666;
  background: #fff;
}

.zoom select {
  grid-area: 1 / 1;
  appearance: none;
  padding: 0 24px 0 8px;
  border: 0;
  background: none;
  font: inherit;
}

.zoom-arrow {
  grid-area: 1 / 1;
  justify-self: end;
  border-left: 1px solid #666;
  background: linear-gradient(#f4f4f4, #d4d4d4);
  pointer-events: none;
}

/* left panel */

.workspace {
  display: flex;
  flex: 1;
  min-height: 0;
}

.sidebar {
  display: flex;
  flex-direction: column;
  width: 211px;
  flex: none;
  background: #e4e4e4;
  border-right: 1px solid #888;
}

.panel-head {
  display: flex;
  align-items: center;
  height: 43px;
  flex: none;
  padding-right: 4px;
  background: linear-gradient(#fff, #e2e2e2 70%);
  border-bottom: 1px solid #666;
}

.rail-tab {
  display: flex;
  justify-content: center;
  width: 38px;
}

.panel-head h2 {
  flex: 1;
  margin: 0 0 4px 10px;
  font-size: 11px;
  font-weight: bold;
  white-space: nowrap;
}

.square {
  width: 16px;
  height: 16px;
  margin-left: 5px;
  margin-bottom: 1px;
  border: 1px solid #666;
}

.panel-body {
  display: flex;
  flex: 1;
  min-height: 0;
}

.rail {
  width: 42px;
  padding-top: 8px;
  background: #cbcbcb;
  border-right: 1px solid #666;
}

.thumbs-panel {
  display: flex;
  flex-direction: column;
  flex: 1;
  padding: 5px 4px 4px;
}

.options {
  align-self: flex-start;
  height: 23px;
}

.options svg {
  margin-bottom: 7px;
}

.list-box {
  display: grid;
  grid-template: minmax(0, 1fr) 17px / minmax(0, 1fr) 17px;
  flex: 1;
  min-height: 0;
  border: 1px solid #666;
  background: #f4f4f4;
}

.thumbs {
  display: flex;
  flex-direction: column;
  justify-content: flex-end;
  align-items: center;
  padding: 0 0 7px 9px;
  overflow: hidden;
}

.thumb {
  flex: none;
  height: 150px;
  color: #111;
  text-align: center;
  text-decoration: none;
}

.frame {
  display: block;
  position: relative;
  padding: 7px 7px 6px;
}

.selected .frame {
  background: #cbcbcb;
}

.sheet {
  width: 83px;
  height: 118px;
  background: #fff;
  box-shadow: 0 1px 2px #555;
}

.corner {
  position: absolute;
  right: 4px;
  bottom: 4px;
  width: 7px;
  height: 7px;
  background: #333;
  border: 1px solid #fff;
  box-sizing: content-box;
}

.number {
  display: block;
  line-height: 17px;
}

.scroll {
  display: flex;
  background: #efefef;
}

.scroll svg {
  fill: none;
  stroke: #555;
  stroke-width: 2;
}

.handle {
  background: #cdcdcd;
}

.vertical {
  flex-direction: column;
  border-left: 1px solid #fff;
}

.vertical .handle {
  height: 17px;
  margin: 13px 1px auto 0;
}

.horizontal {
  border-top: 1px solid #fff;
}

.horizontal .handle {
  width: 92px;
  margin: 0 auto 1px 1px;
}

.splitter {
  display: flex;
  align-items: center;
  width: 6px;
  flex: none;
}

.grip {
  width: 4px;
  height: 48px;
  margin: 0 0 2px 1px;
  background: radial-gradient(circle, #ddd 35%, transparent 45%) 0 0 / 2px 2px;
}

/* document */

.viewer {
  display: flex;
  justify-content: flex-end;
  align-items: flex-start;
  flex: 1;
  min-width: 0;
  padding: 4px 25px 8px 0;
  background: #555;
}

.page {
  width: 100%;
  max-width: 450px;
  flex: 0 1 auto;
  background: #fff;
}

/* line drawings */

.page,
.sheet {
  fill: none;
  stroke: #555;
  stroke-width: 2;
}

.sheet {
  stroke: #888;
  stroke-width: 4;
}

.outline {
  stroke: #999;
  stroke-width: 2;
}

.thick {
  stroke: #333;
}

.hatch {
  stroke: #555;
  stroke-width: 16;
  stroke-dasharray: 3 2;
}

.dashes {
  stroke-dasharray: 14 6;
}

.red-line {
  stroke: #f0483f;
  stroke-width: 3;
}

.sheet > .red-line {
  stroke: #f5a5a0;
  stroke-width: 2;
}

.blue-line {
  stroke: #5c8fb5;
}

.red-fill {
  fill: #e5575a;
  stroke: #a8363a;
}

.black-fill {
  fill: #0a0a0a;
  stroke: none;
}

.grey-fill {
  fill: #dde2e5;
}

.copy {
  stroke: #bbb;
  stroke-width: 2;
}

.copy.dark {
  stroke: #777;
  stroke-width: 3;
}

.label,
.fuse-number,
.heading,
.folio {
  font-family: "Liberation Sans", Arial, sans-serif;
  fill: #222;
  stroke: none;
}

.label {
  font-size: 21px;
  font-weight: bold;
}

.fuse-number {
  font-size: 15px;
}

.heading {
  font-size: 11px;
  font-weight: bold;
}

.folio {
  font-size: 6px;
}
```
